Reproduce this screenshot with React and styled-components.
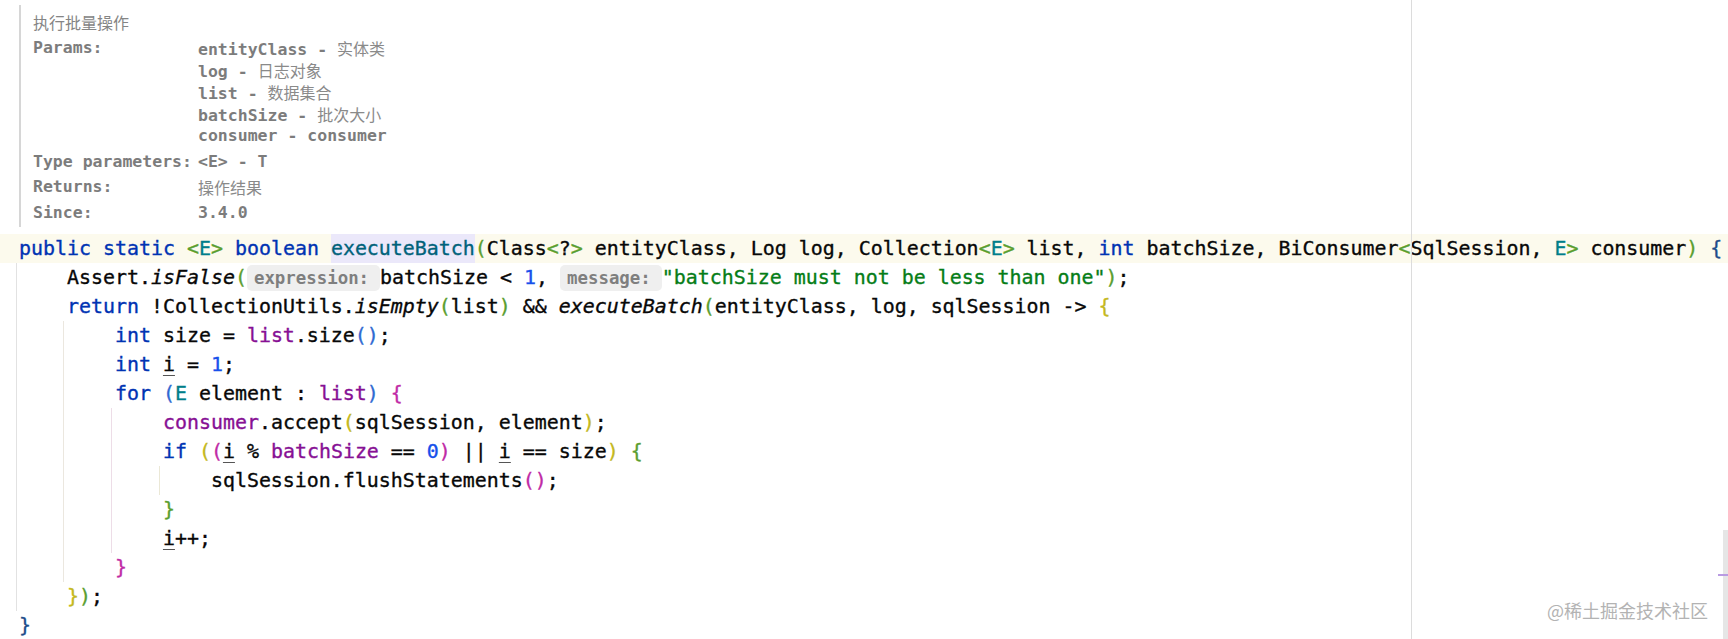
import React from "react";
import styled, { createGlobalStyle } from "styled-components";

const GlobalStyle = createGlobalStyle`
  html, body {
    margin: 0;
    padding: 0;
    background: #ffffff;
  }
`;

const MONO = `"DejaVu Sans Mono", "Liberation Mono", monospace`;
const CJK = `"Noto Sans CJK SC", "Noto Sans", sans-serif`;

const Editor = styled.div`
  position: relative;
  width: 1728px;
  height: 639px;
  overflow: hidden;
  background: #ffffff;
  padding-top: 5px;
  box-sizing: border-box;
`;

const Doc = styled.div`
  margin-left: 19px;
  border-left: 2px solid #d6d6d6;
  padding: 6px 0 3px 12px;
  color: #808080;
`;

const DocTitle = styled.div`
  font-family: ${CJK};
  font-size: 16px;
  line-height: 22px;
  color: #858585;
`;

const DocGrid = styled.div`
  display: grid;
  grid-template-columns: 165px auto;
  row-gap: 3.5px;
  margin-top: 4px;
`;

const DocLabel = styled.div`
  font-family: ${MONO};
  font-weight: bold;
  font-size: 16.5px;
  line-height: 22px;
  color: #7c7c7c;
  white-space: pre;
`;

const DocValues = styled.div`
  display: flex;
  flex-direction: column;
`;

const DocValue = styled.div`
  font-family: ${MONO};
  font-weight: bold;
  font-size: 16.5px;
  line-height: 22px;
  height: 22px;
  color: #7c7c7c;
  white-space: pre;
`;

const DocText = styled.span`
  font-family: ${CJK};
  font-weight: normal;
  font-size: 16px;
  color: #8a8a8a;
`;

const Code = styled.div`
  margin-top: 7px;
  font-family: ${MONO};
  font-size: 19.93px;
  color: #080808;
  -webkit-text-stroke: 0.35px currentColor;
`;

const Block = styled.div`
  background-image: linear-gradient(${(p) => p.$guide}, ${(p) => p.$guide});
  background-repeat: no-repeat;
  background-size: 1px 100%;
  background-position: ${(p) => p.$at}px 0;
`;

const Line = styled.div`
  height: 29px;
  line-height: 29px;
  padding-left: 19px;
  white-space: pre;
  background: ${(p) => (p.$active ? "#fcfaed" : "transparent")};
`;

const Kw = styled.span`
  color: #0033b3;
`;

const Tp = styled.span`
  color: #007e8a;
`;

const Decl = styled.span`
  color: #00627a;
  background: #ebe8fa;
  display: inline-block;
  height: 29px;
`;

const Call = styled.span`
  font-style: italic;
`;

const Str = styled.span`
  color: #067d17;
`;

const Num = styled.span`
  color: #1750eb;
`;

const Fld = styled.span`
  color: #871094;
`;

const Var = styled.span`
  text-decoration: underline;
  text-decoration-color: #555555;
  text-decoration-thickness: 1px;
  text-underline-offset: 4px;
`;

const Br = styled.span`
  color: ${(p) => p.$c};
`;

const Hint = styled.span`
  display: inline-block;
  vertical-align: top;
  margin-top: 2px;
  height: 26px;
  line-height: 26px;
  padding: 0 11px 0 7px;
  border-radius: 5px;
  background: #efefef;
  color: #7f7f7f;
  font-size: 17.4px;
  font-weight: bold;
  -webkit-text-stroke: 0;
`;

const RightMargin = styled.div`
  position: absolute;
  top: 0;
  bottom: 0;
  left: 1411px;
  width: 1px;
  background: #dcdcdc;
`;

const Scrollbar = styled.div`
  position: absolute;
  top: 530px;
  bottom: 0;
  right: 0;
  width: 5px;
  background: #e6e6e6;
`;

const Marker = styled.div`
  position: absolute;
  top: 574px;
  right: 0;
  width: 10px;
  height: 2px;
  background: #b99be2;
`;

const Watermark = styled.div`
  position: absolute;
  right: 20px;
  top: 597px;
  font-family: ${CJK};
  font-size: 18px;
  line-height: 26px;
  color: #b3b3b3;
`;

const C = {
  navy: "#1d4c8a",
  green: "#5a9e2f",
  yellow: "#c4b820",
  magenta: "#bf2aa6",
  blue: "#2f6ad2",
};

const params = [
  ["entityClass", "实体类"],
  ["log", "日志对象"],
  ["list", "数据集合"],
  ["batchSize", "批次大小"],
];

export default function App() {
  return (
    <>
      <GlobalStyle />
      <Editor>
        <Doc>
          <DocTitle>执行批量操作</DocTitle>
          <DocGrid>
            <DocLabel>Params:</DocLabel>
            <DocValues>
              {params.map(([name, desc]) => (
                <DocValue key={name}>
                  {name} - <DocText>{desc}</DocText>
                </DocValue>
              ))}
              <DocValue>consumer - consumer</DocValue>
            </DocValues>
            <DocLabel>Type parameters:</DocLabel>
            <DocValue>{"<E> - T"}</DocValue>
            <DocLabel>Returns:</DocLabel>
            <DocValue>
              <DocText>操作结果</DocText>
            </DocValue>
            <DocLabel>Since:</DocLabel>
            <DocValue>3.4.0</DocValue>
          </DocGrid>
        </Doc>

        <Code>
          <Line $active>
            <Kw>public static </Kw>
            <Br $c={C.green}>{"<"}</Br>
            <Tp>E</Tp>
            <Br $c={C.green}>{">"}</Br> <Kw>boolean</Kw> <Decl>executeBatch</Decl>
            <Br $c={C.green}>(</Br>Class<Br $c={C.green}>{"<"}</Br>?
            <Br $c={C.green}>{">"}</Br> entityClass, Log log, Collection
            <Br $c={C.green}>{"<"}</Br>
            <Tp>E</Tp>
            <Br $c={C.green}>{">"}</Br> list, <Kw>int</Kw> batchSize, BiConsumer
            <Br $c={C.green}>{"<"}</Br>SqlSession, <Tp>E</Tp>
            <Br $c={C.green}>{">"}</Br> consumer<Br $c={C.green}>)</Br>{" "}
            <Br $c={C.navy}>{"{"}</Br>
          </Line>
          <Block $at={16} $guide="#e2e2e2">
            <Line>
              {"    Assert."}
              <Call>isFalse</Call>
              <Br $c={C.green}>(</Br>
              <Hint>expression:</Hint>
              {"batchSize < "}
              <Num>1</Num>
              {", "}
              <Hint>message:</Hint>
              <Str>"batchSize must not be less than one"</Str>
              <Br $c={C.green}>)</Br>;
            </Line>
            <Line>
              {"    "}
              <Kw>return</Kw> !CollectionUtils.<Call>isEmpty</Call>
              <Br $c={C.green}>(</Br>list<Br $c={C.green}>)</Br> &&{" "}
              <Call>executeBatch</Call>
              <Br $c={C.green}>(</Br>entityClass, log, sqlSession -&gt;{" "}
              <Br $c={C.yellow}>{"{"}</Br>
            </Line>
            <Block $at={63} $guide="#ebe7df">
              <Line>
                {"        "}
                <Kw>int</Kw> size = <Fld>list</Fld>.size
                <Br $c={C.blue}>()</Br>;
              </Line>
              <Line>
                {"        "}
                <Kw>int</Kw> <Var>i</Var> = <Num>1</Num>;
              </Line>
              <Line>
                {"        "}
                <Kw>for</Kw> <Br $c={C.blue}>(</Br>
                <Tp>E</Tp> element : <Fld>list</Fld>
                <Br $c={C.blue}>)</Br> <Br $c={C.magenta}>{"{"}</Br>
              </Line>
              <Block $at={111} $guide="#eddde7">
                <Line>
                  {"            "}
                  <Fld>consumer</Fld>.accept<Br $c={C.yellow}>(</Br>sqlSession, element
                  <Br $c={C.yellow}>)</Br>;
                </Line>
                <Line>
                  {"            "}
                  <Kw>if</Kw> <Br $c={C.yellow}>(</Br>
                  <Br $c={C.magenta}>(</Br>
                  <Var>i</Var> % <Fld>batchSize</Fld> == <Num>0</Num>
                  <Br $c={C.magenta}>)</Br> || <Var>i</Var> == size
                  <Br $c={C.yellow}>)</Br> <Br $c={C.green}>{"{"}</Br>
                </Line>
                <Block $at={159} $guide="#ebe8d6">
                  <Line>
                    {"                sqlSession.flushStatements"}
                    <Br $c={C.magenta}>()</Br>;
                  </Line>
                </Block>
                <Line>
                  {"            "}
                  <Br $c={C.green}>{"}"}</Br>
                </Line>
                <Line>
                  {"            "}
                  <Var>i</Var>++;
                </Line>
              </Block>
              <Line>
                {"        "}
                <Br $c={C.magenta}>{"}"}</Br>
              </Line>
            </Block>
            <Line>
              {"    "}
              <Br $c={C.yellow}>{"}"}</Br>
              <Br $c={C.green}>)</Br>;
            </Line>
          </Block>
          <Line>
            <Br $c={C.navy}>{"}"}</Br>
          </Line>
        </Code>

        <RightMargin />
        <Scrollbar />
        <Marker />
        <Watermark>@稀土掘金技术社区</Watermark>
      </Editor>
    </>
  );
}
